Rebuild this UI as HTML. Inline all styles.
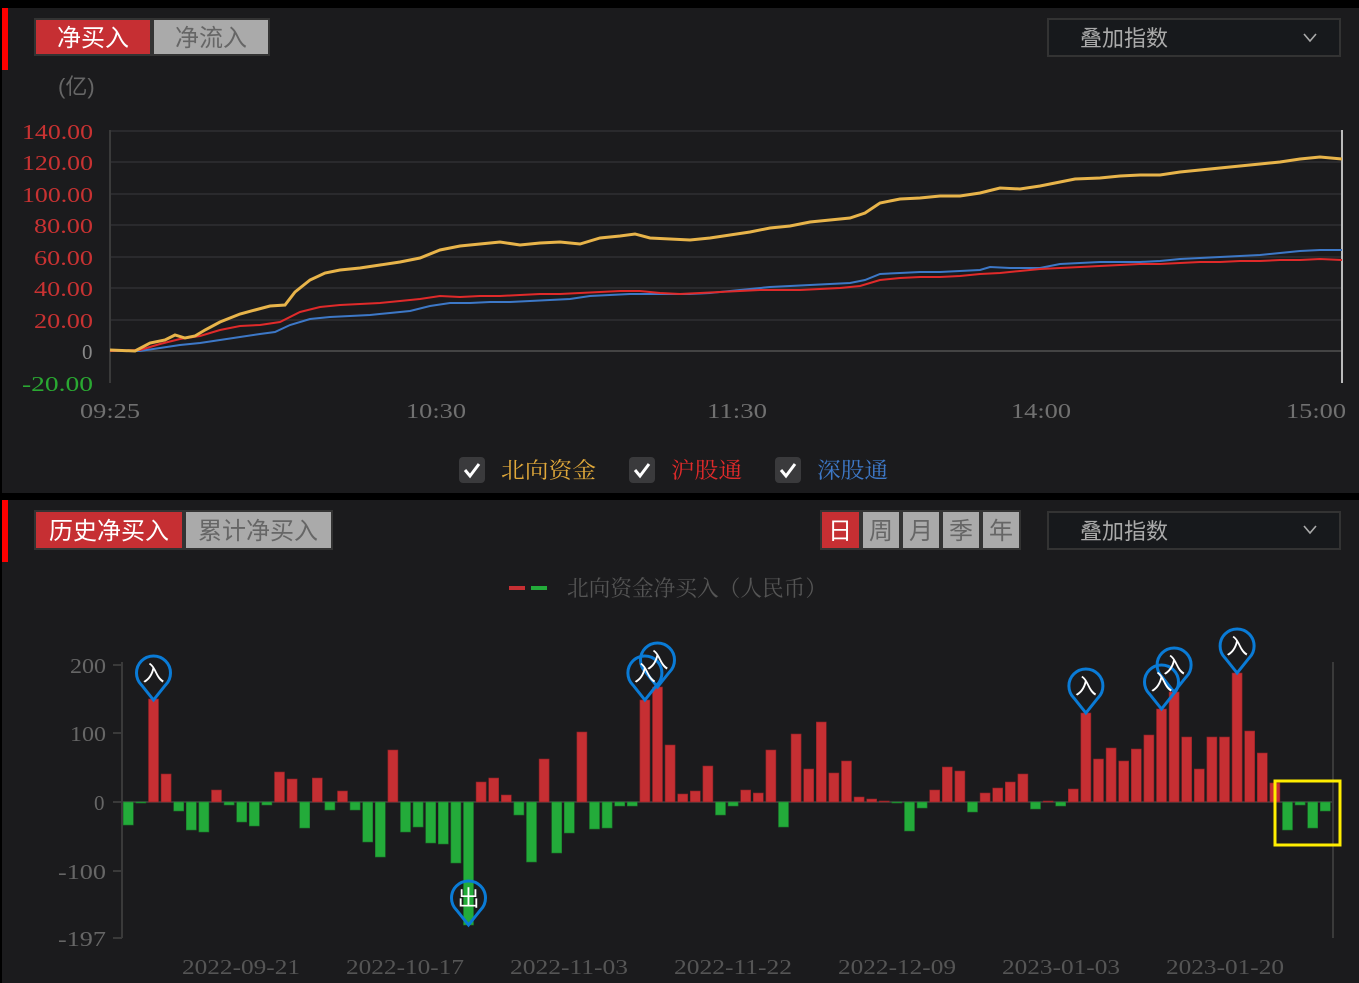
<!DOCTYPE html>
<html><head><meta charset="utf-8"><style>
html,body{margin:0;padding:0;background:#000;width:1359px;height:983px;overflow:hidden}
svg{display:block}
.cj{font-family:"Liberation Sans","Noto Sans CJK SC",sans-serif}
.sr{font-family:"Liberation Serif","Noto Serif CJK SC",serif}
</style></head><body>
<svg width="1359" height="983" viewBox="0 0 1359 983" xmlns="http://www.w3.org/2000/svg">
<rect x="0" y="0" width="1359" height="983" fill="#000"/>
<rect x="2" y="8" width="1357" height="485" fill="#1b1b1d"/>
<rect x="2" y="500" width="1357" height="483" fill="#1b1b1d"/>
<rect x="2" y="8" width="6" height="62" fill="#ff0000"/>
<rect x="2" y="500" width="6" height="62" fill="#ff0000"/>

<rect x="34" y="18" width="236" height="38" fill="#333"/>
<rect x="36" y="20" width="114" height="34" fill="#c62f33"/>
<rect x="154" y="20" width="114" height="34" fill="#aaaaaa"/>
<text x="93" y="46" class="cj" font-size="24" fill="#fff" text-anchor="middle">净买入</text>
<text x="211" y="46" class="cj" font-size="24" fill="#666" text-anchor="middle">净流入</text>
<text x="58" y="94" class="cj" font-size="22" fill="#666">(亿)</text>

<rect x="1048" y="19" width="292" height="37" fill="#17191c" stroke="#333" stroke-width="2"/>
<text x="1080" y="46" class="cj" font-size="22" fill="#aaa">叠加指数</text>
<path d="M1304 34 L1310 41 L1316 34" fill="none" stroke="#aaa" stroke-width="1.6"/>

<g stroke="#2a2a2d" stroke-width="2">
<line x1="110" y1="131" x2="1342" y2="131"/><line x1="110" y1="162" x2="1342" y2="162"/>
<line x1="110" y1="194" x2="1342" y2="194"/><line x1="110" y1="225" x2="1342" y2="225"/>
<line x1="110" y1="257" x2="1342" y2="257"/><line x1="110" y1="288" x2="1342" y2="288"/>
<line x1="110" y1="320" x2="1342" y2="320"/>
</g>
<line x1="110" y1="351" x2="1342" y2="351" stroke="#444" stroke-width="2"/>
<line x1="110" y1="130" x2="110" y2="383" stroke="#3a3a3a" stroke-width="2"/>
<line x1="1342" y1="130" x2="1342" y2="383" stroke="#bbb" stroke-width="2"/>
<g class="sr" font-size="21" fill="#c83232" lengthAdjust="spacingAndGlyphs">
<text x="22" y="139" textLength="71" lengthAdjust="spacingAndGlyphs">140.00</text>
<text x="22" y="170" textLength="71" lengthAdjust="spacingAndGlyphs">120.00</text>
<text x="22" y="202" textLength="71" lengthAdjust="spacingAndGlyphs">100.00</text>
<text x="34" y="233" textLength="59" lengthAdjust="spacingAndGlyphs">80.00</text>
<text x="34" y="265" textLength="59" lengthAdjust="spacingAndGlyphs">60.00</text>
<text x="34" y="296" textLength="59" lengthAdjust="spacingAndGlyphs">40.00</text>
<text x="34" y="328" textLength="59" lengthAdjust="spacingAndGlyphs">20.00</text>
<text x="82" y="359" fill="#888">0</text>
<text x="22" y="391" fill="#2aa832" textLength="71" lengthAdjust="spacingAndGlyphs">-20.00</text>
</g>
<g class="sr" font-size="21" fill="#707070">
<text x="80" y="418" textLength="60" lengthAdjust="spacingAndGlyphs">09:25</text>
<text x="406" y="418" textLength="60" lengthAdjust="spacingAndGlyphs">10:30</text>
<text x="707" y="418" textLength="60" lengthAdjust="spacingAndGlyphs">11:30</text>
<text x="1011" y="418" textLength="60" lengthAdjust="spacingAndGlyphs">14:00</text>
<text x="1286" y="418" textLength="60" lengthAdjust="spacingAndGlyphs">15:00</text>
</g>
<polyline fill="none" stroke="#3d78c7" stroke-width="2" points="110,351 140,351 160,348 180,345 200,343 220,340 240,337 260,334 275,332 290,325 310,319 330,317 350,316 370,315 390,313 410,311 430,306 450,303 470,303 490,302 510,302 530,301 550,300 570,299 590,296 610,295 630,294 650,294 670,294 690,294 710,293 730,291 750,289 770,287 790,286 810,285 830,284 850,283 865,280 880,274 900,273 920,272 940,272 960,271 980,270 990,267 1010,268 1040,268 1060,264 1080,263 1100,262 1140,262 1160,261 1180,259 1200,258 1240,256 1260,255 1280,253 1300,251 1320,250 1342,250"/>
<polyline fill="none" stroke="#e02a2a" stroke-width="2" points="110,351 140,350 160,344 180,339 200,336 220,330 240,326 260,325 280,322 300,312 320,307 340,305 360,304 380,303 400,301 420,299 440,296 460,297 480,296 500,296 520,295 540,294 560,294 580,293 600,292 620,291 640,291 660,293 680,294 700,293 720,292 740,291 760,290 780,290 800,290 820,289 840,288 860,286 880,280 900,278 920,277 940,277 960,276 980,274 1000,273 1020,271 1040,269 1060,268 1080,267 1100,266 1120,265 1140,264 1160,264 1180,263 1200,262 1220,262 1240,261 1260,261 1280,260 1300,260 1320,259 1342,260"/>
<polyline fill="none" stroke="#e8b44a" stroke-width="3" points="110,350 135,351 150,343 165,340 175,335 185,338 195,336 205,330 220,322 240,314 255,310 270,306 285,305 295,292 310,280 325,273 340,270 360,268 380,265 400,262 420,258 440,250 460,246 480,244 500,242 520,245 540,243 560,242 580,244 600,238 620,236 635,234 650,238 670,239 690,240 710,238 730,235 750,232 770,228 790,226 810,222 830,220 850,218 865,213 880,203 900,199 920,198 940,196 960,196 980,193 1000,188 1020,189 1040,186 1060,182 1075,179 1100,178 1120,176 1140,175 1160,175 1180,172 1200,170 1220,168 1240,166 1260,164 1280,162 1300,159 1320,157 1342,159"/>

<rect x="459" y="457" width="26" height="26" rx="4" fill="#3a3a3c"/>
<path d="M465 470 L470 476 L479 464" fill="none" stroke="#fff" stroke-width="3"/>
<rect x="629" y="457" width="26" height="26" rx="4" fill="#3a3a3c"/>
<path d="M635 470 L640 476 L649 464" fill="none" stroke="#fff" stroke-width="3"/>
<rect x="775" y="457" width="26" height="26" rx="4" fill="#3a3a3c"/>
<path d="M781 470 L786 476 L795 464" fill="none" stroke="#fff" stroke-width="3"/>
<text x="501" y="478" class="sr" font-size="22" fill="#e0a83a" textLength="95" lengthAdjust="spacingAndGlyphs">北向资金</text>
<text x="671" y="478" class="sr" font-size="22" fill="#e02a2a" textLength="71" lengthAdjust="spacingAndGlyphs">沪股通</text>
<text x="817" y="478" class="sr" font-size="22" fill="#3d78c7" textLength="71" lengthAdjust="spacingAndGlyphs">深股通</text>

<rect x="34" y="510" width="299" height="40" fill="#333"/>
<rect x="36" y="512" width="146" height="36" fill="#c62f33"/>
<rect x="186" y="512" width="145" height="36" fill="#aaaaaa"/>
<text x="109" y="539" class="cj" font-size="24" fill="#fff" text-anchor="middle">历史净买入</text>
<text x="258" y="539" class="cj" font-size="24" fill="#666" text-anchor="middle">累计净买入</text>

<rect x="820" y="510" width="201" height="40" fill="#333"/>
<rect x="822" y="512" width="37" height="36" fill="#c62f33"/>
<rect x="863" y="512" width="36" height="36" fill="#aaa"/>
<rect x="903" y="512" width="36" height="36" fill="#aaa"/>
<rect x="943" y="512" width="36" height="36" fill="#aaa"/>
<rect x="983" y="512" width="36" height="36" fill="#aaa"/>
<g class="cj" font-size="24" text-anchor="middle" fill="#666">
<text x="840" y="539" fill="#fff">日</text><text x="881" y="539">周</text><text x="921" y="539">月</text><text x="961" y="539">季</text><text x="1001" y="539">年</text>
</g>
<rect x="1048" y="512" width="292" height="37" fill="#17191c" stroke="#333" stroke-width="2"/>
<text x="1080" y="539" class="cj" font-size="22" fill="#aaa">叠加指数</text>
<path d="M1304 526 L1310 533 L1316 526" fill="none" stroke="#aaa" stroke-width="1.6"/>

<rect x="509" y="586" width="16" height="4" fill="#c62f33"/>
<rect x="531" y="586" width="16" height="4" fill="#23ab3a"/>
<text x="567" y="596" class="sr" font-size="22" fill="#555" textLength="260" lengthAdjust="spacingAndGlyphs">北向资金净买入（人民币）</text>

<line x1="122" y1="662" x2="122" y2="938" stroke="#3a3a3a" stroke-width="2"/>
<line x1="1333" y1="662" x2="1333" y2="938" stroke="#3a3a3a" stroke-width="2"/>
<g stroke="#3a3a3a" stroke-width="2">
<line x1="113" y1="665" x2="122" y2="665"/><line x1="113" y1="733" x2="122" y2="733"/>
<line x1="113" y1="802" x2="122" y2="802"/><line x1="113" y1="871" x2="122" y2="871"/><line x1="113" y1="938" x2="122" y2="938"/>
</g>
<line x1="122" y1="802" x2="1333" y2="802" stroke="#3a3a3a" stroke-width="2"/>
<g class="sr" font-size="21" fill="#666">
<text x="70" y="673" textLength="36" lengthAdjust="spacingAndGlyphs">200</text>
<text x="70" y="741" textLength="36" lengthAdjust="spacingAndGlyphs">100</text>
<text x="94" y="810">0</text>
<text x="58" y="879" textLength="48" lengthAdjust="spacingAndGlyphs">-100</text>
<text x="58" y="946" textLength="48" lengthAdjust="spacingAndGlyphs">-197</text>
</g>
<g class="sr" font-size="21" fill="#555">
<text x="182" y="974" textLength="118" lengthAdjust="spacingAndGlyphs">2022-09-21</text>
<text x="346" y="974" textLength="118" lengthAdjust="spacingAndGlyphs">2022-10-17</text>
<text x="510" y="974" textLength="118" lengthAdjust="spacingAndGlyphs">2022-11-03</text>
<text x="674" y="974" textLength="118" lengthAdjust="spacingAndGlyphs">2022-11-22</text>
<text x="838" y="974" textLength="118" lengthAdjust="spacingAndGlyphs">2022-12-09</text>
<text x="1002" y="974" textLength="118" lengthAdjust="spacingAndGlyphs">2023-01-03</text>
<text x="1166" y="974" textLength="118" lengthAdjust="spacingAndGlyphs">2023-01-20</text>
</g>

<g fill="#c62f33" stroke="#8e2226" stroke-width="0.6">
<rect x="148.5" y="699" width="10" height="103"/>
<rect x="161.1" y="774" width="10" height="28"/>
<rect x="211.5" y="790" width="10" height="12"/>
<rect x="274.5" y="772" width="10" height="30"/>
<rect x="287.1" y="779" width="10" height="23"/>
<rect x="312.3" y="778" width="10" height="24"/>
<rect x="337.5" y="791" width="10" height="11"/>
<rect x="387.9" y="750" width="10" height="52"/>
<rect x="476.1" y="782" width="10" height="20"/>
<rect x="488.7" y="778" width="10" height="24"/>
<rect x="501.3" y="795" width="10" height="7"/>
<rect x="539.1" y="759" width="10" height="43"/>
<rect x="576.9" y="732" width="10" height="70"/>
<rect x="639.9" y="700" width="10" height="102"/>
<rect x="652.5" y="687" width="10" height="115"/>
<rect x="665.1" y="745" width="10" height="57"/>
<rect x="677.7" y="794" width="10" height="8"/>
<rect x="690.3" y="791" width="10" height="11"/>
<rect x="702.9" y="766" width="10" height="36"/>
<rect x="740.7" y="790" width="10" height="12"/>
<rect x="753.3" y="793" width="10" height="9"/>
<rect x="765.9" y="750" width="10" height="52"/>
<rect x="791.1" y="734" width="10" height="68"/>
<rect x="803.7" y="769" width="10" height="33"/>
<rect x="816.3" y="722" width="10" height="80"/>
<rect x="828.9" y="773" width="10" height="29"/>
<rect x="841.5" y="761" width="10" height="41"/>
<rect x="854.1" y="797" width="10" height="5"/>
<rect x="866.7" y="799" width="10" height="3"/>
<rect x="879.3" y="801" width="10" height="1"/>
<rect x="929.7" y="790" width="10" height="12"/>
<rect x="942.3" y="767" width="10" height="35"/>
<rect x="954.9" y="771" width="10" height="31"/>
<rect x="980.1" y="793" width="10" height="9"/>
<rect x="992.7" y="788" width="10" height="14"/>
<rect x="1005.3" y="782" width="10" height="20"/>
<rect x="1017.9" y="774" width="10" height="28"/>
<rect x="1043.1" y="801" width="10" height="1"/>
<rect x="1068.3" y="789" width="10" height="13"/>
<rect x="1080.9" y="713" width="10" height="89"/>
<rect x="1093.5" y="759" width="10" height="43"/>
<rect x="1106.1" y="748" width="10" height="54"/>
<rect x="1118.7" y="761" width="10" height="41"/>
<rect x="1131.3" y="749" width="10" height="53"/>
<rect x="1143.9" y="735" width="10" height="67"/>
<rect x="1156.5" y="709" width="10" height="93"/>
<rect x="1169.1" y="692" width="10" height="110"/>
<rect x="1181.7" y="737" width="10" height="65"/>
<rect x="1194.3" y="769" width="10" height="33"/>
<rect x="1206.9" y="737" width="10" height="65"/>
<rect x="1219.5" y="737" width="10" height="65"/>
<rect x="1232.1" y="673" width="10" height="129"/>
<rect x="1244.7" y="731" width="10" height="71"/>
<rect x="1257.3" y="753" width="10" height="49"/>
<rect x="1269.9" y="783" width="10" height="19"/>
</g>
<g fill="#23ab3a" stroke="#1a7a2a" stroke-width="0.6">
<rect x="123.3" y="802" width="10" height="23"/>
<rect x="135.9" y="802" width="10" height="1"/>
<rect x="173.7" y="802" width="10" height="9"/>
<rect x="186.3" y="802" width="10" height="28"/>
<rect x="198.9" y="802" width="10" height="30"/>
<rect x="224.1" y="802" width="10" height="3"/>
<rect x="236.7" y="802" width="10" height="20"/>
<rect x="249.3" y="802" width="10" height="24"/>
<rect x="261.9" y="802" width="10" height="3"/>
<rect x="299.7" y="802" width="10" height="26"/>
<rect x="324.9" y="802" width="10" height="8"/>
<rect x="350.1" y="802" width="10" height="8"/>
<rect x="362.7" y="802" width="10" height="40"/>
<rect x="375.3" y="802" width="10" height="55"/>
<rect x="400.5" y="802" width="10" height="30"/>
<rect x="413.1" y="802" width="10" height="25"/>
<rect x="425.7" y="802" width="10" height="41"/>
<rect x="438.3" y="802" width="10" height="42"/>
<rect x="450.9" y="802" width="10" height="61"/>
<rect x="463.5" y="802" width="10" height="123"/>
<rect x="513.9" y="802" width="10" height="13"/>
<rect x="526.5" y="802" width="10" height="60"/>
<rect x="551.7" y="802" width="10" height="51"/>
<rect x="564.3" y="802" width="10" height="31"/>
<rect x="589.5" y="802" width="10" height="27"/>
<rect x="602.1" y="802" width="10" height="26"/>
<rect x="614.7" y="802" width="10" height="4"/>
<rect x="627.3" y="802" width="10" height="4"/>
<rect x="715.5" y="802" width="10" height="13"/>
<rect x="728.1" y="802" width="10" height="4"/>
<rect x="778.5" y="802" width="10" height="25"/>
<rect x="891.9" y="802" width="10" height="1"/>
<rect x="904.5" y="802" width="10" height="29"/>
<rect x="917.1" y="802" width="10" height="6"/>
<rect x="967.5" y="802" width="10" height="10"/>
<rect x="1030.5" y="802" width="10" height="7"/>
<rect x="1055.7" y="802" width="10" height="4"/>
<rect x="1282.5" y="802" width="10" height="28"/>
<rect x="1295.1" y="802" width="10" height="3"/>
<rect x="1307.7" y="802" width="10" height="26"/>
<rect x="1320.3" y="802" width="10" height="9"/>
</g>

<rect x="1275" y="781" width="65" height="64" fill="none" stroke="#ffee00" stroke-width="3"/>

<g fill="none" stroke="#0a7bd6" stroke-width="3">
<path d="M153.5 700 L141.5 685 A17 17 0 1 1 165.5 685 Z"/>
<path d="M644.9 700 L632.9 685 A17 17 0 1 1 656.9 685 Z"/>
<path d="M657.5 687 L645.5 672 A17 17 0 1 1 669.5 672 Z"/>
<path d="M1085.9 713 L1073.9 698 A17 17 0 1 1 1097.9 698 Z"/>
<path d="M1161.5 709 L1149.5 694 A17 17 0 1 1 1173.5 694 Z"/>
<path d="M1174.1 692 L1162.1 677 A17 17 0 1 1 1186.1 677 Z"/>
<path d="M1237.1 673 L1225.1 658 A17 17 0 1 1 1249.1 658 Z"/>
<path d="M468.5 925 L456.5 910 A17 17 0 1 1 480.5 910 Z"/>
</g>
<g class="cj" font-size="22" fill="#fff" text-anchor="middle">
<text x="153.5" y="681">入</text>
<text x="644.9" y="681">入</text>
<text x="657.5" y="668">入</text>
<text x="1085.9" y="694">入</text>
<text x="1161.5" y="690">入</text>
<text x="1174.1" y="673">入</text>
<text x="1237.1" y="654">入</text>
<text x="468.5" y="906">出</text>
</g>
</svg>
</body></html>
